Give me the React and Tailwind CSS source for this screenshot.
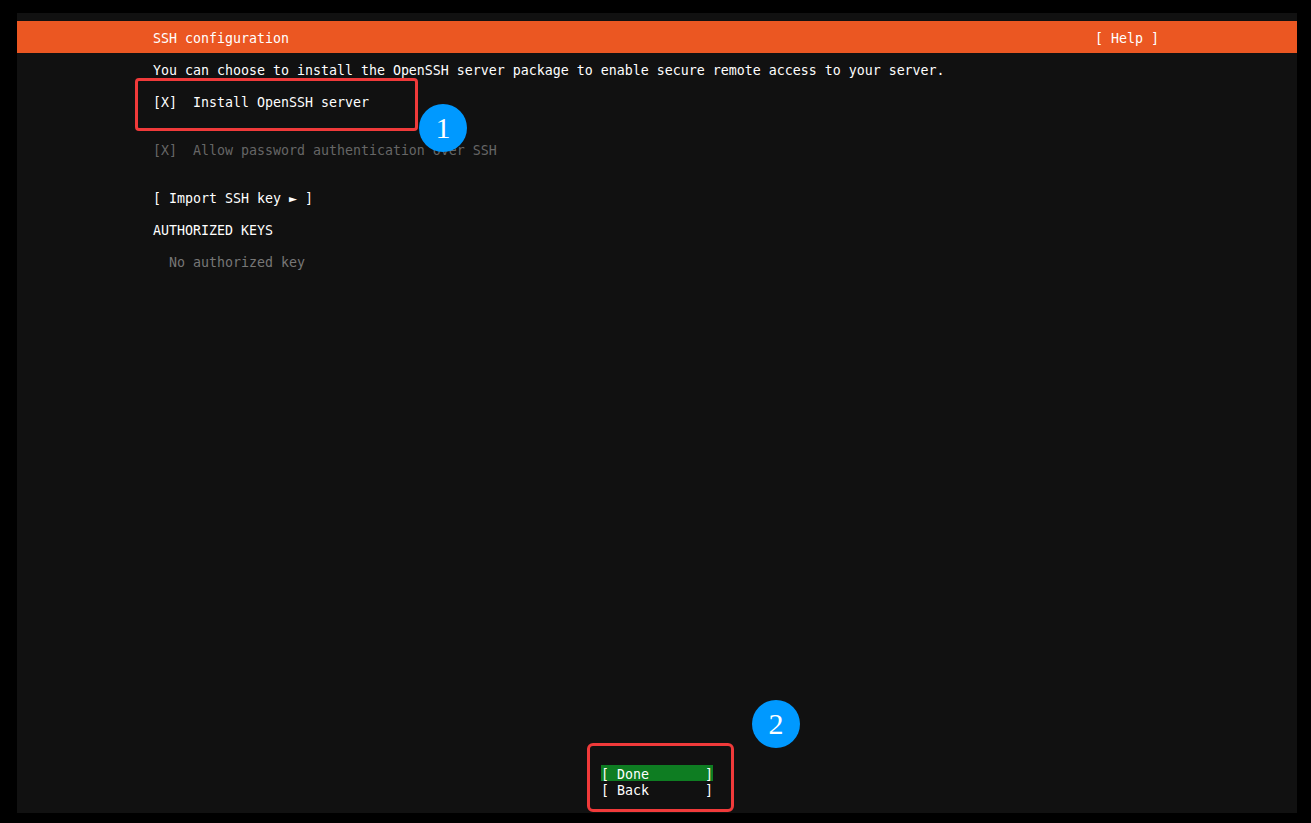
import React from 'react';

const mono = "font-['DejaVu_Sans_Mono',monospace] text-[13.29px] leading-[20px] whitespace-pre";

const Row = ({ children, className = '' }) => (
  <div className={`h-4 pl-[136px] ${className}`}>{children}</div>
);

const Marker = ({ className, children }) => (
  <div
    className={`absolute w-12 h-12 rounded-full bg-[#0099ff] text-white flex items-center justify-center font-['Liberation_Serif',serif] text-[30px] leading-none ${className}`}
  >
    {children}
  </div>
);

const App = () => {
  return (
    <div className={`relative w-[1311px] h-[823px] overflow-hidden bg-black pt-[13px] pl-[17px] text-white ${mono}`}>
      <div className="w-[1280px] h-[800px] bg-[#111111] pt-2 flex flex-col">
        {/* header bar */}
        <div className="h-8 bg-[#eb5722] pt-2 flex justify-between pl-[136px] pr-[138px]">
          <div className="h-4">SSH configuration</div>
          <div className="h-4">[ Help ]</div>
        </div>

        <div className="mt-2 flex flex-col">
          <Row>You can choose to install the OpenSSH server package to enable secure remote access to your server.</Row>
          <Row className="mt-4">[X]  Install OpenSSH server</Row>
          <Row className="mt-8 text-[#666666]">[X]  Allow password authentication over SSH</Row>
          <Row className="mt-8">[ Import SSH key ► ]</Row>
          <Row className="mt-4">AUTHORIZED KEYS</Row>
          <Row className="mt-4 text-[#777777]">  No authorized key</Row>
        </div>

        {/* buttons */}
        <div className="mt-auto mb-4 flex flex-col items-center">
          <div className="w-28 h-4 bg-[#0e7d22]">[ Done       ]</div>
          <div className="w-28 h-4">[ Back       ]</div>
        </div>
      </div>

      {/* annotations */}
      <div className="absolute left-[135px] top-[78px] w-[283px] h-[53px] border-[3px] border-[#f03a3a] rounded-[4px]" />
      <Marker className="left-[419px] top-[104px]">1</Marker>
      <div className="absolute left-[587px] top-[743px] w-[147px] h-[69px] border-[3px] border-[#f03a3a] rounded-[6px]" />
      <Marker className="left-[752px] top-[700px]">2</Marker>
    </div>
  );
};

export default App;
